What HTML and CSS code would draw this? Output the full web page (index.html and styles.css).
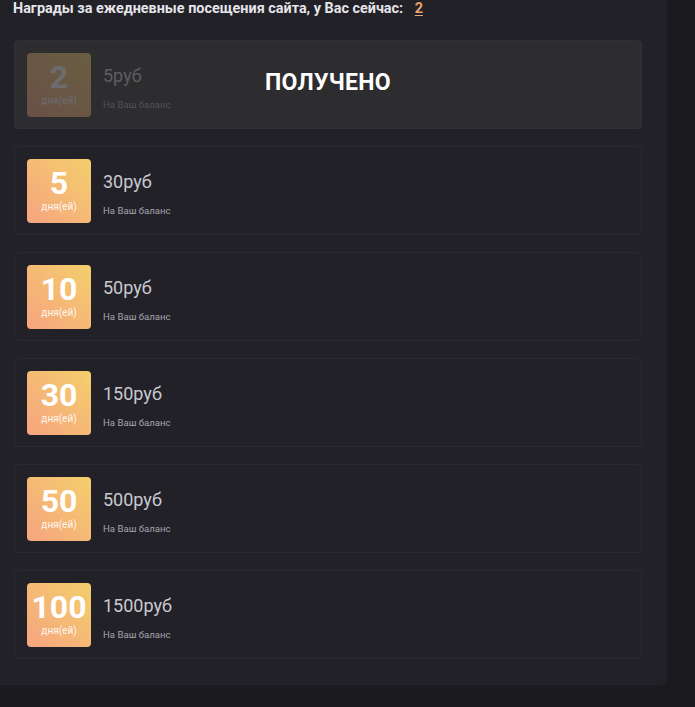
FILE: index.html
```html
<!DOCTYPE html>
<html>
    <head>
        <title>Ежедневные награды</title>
        <meta charset="UTF-8">
        <link rel="stylesheet" href="styles.css">
    </head>
    <body>
        <div class="panel">
            <div class="title">Награды за ежедневные посещения сайта, у Вас сейчас: <span class="days-now">2</span></div>

            <div class="reward done">
                <div class="reward-body">
                    <div class="badge"><span class="num">2</span><span class="unit">дня(ей)</span></div>
                    <div class="info">
                        <div class="price">5руб</div>
                        <div class="note">На Ваш баланс</div>
                    </div>
                </div>
                <div class="got">ПОЛУЧЕНО</div>
            </div>

            <div class="reward">
                <div class="reward-body">
                    <div class="badge"><span class="num">5</span><span class="unit">дня(ей)</span></div>
                    <div class="info">
                        <div class="price">30руб</div>
                        <div class="note">На Ваш баланс</div>
                    </div>
                </div>
            </div>

            <div class="reward">
                <div class="reward-body">
                    <div class="badge"><span class="num">10</span><span class="unit">дня(ей)</span></div>
                    <div class="info">
                        <div class="price">50руб</div>
                        <div class="note">На Ваш баланс</div>
                    </div>
                </div>
            </div>

            <div class="reward">
                <div class="reward-body">
                    <div class="badge"><span class="num">30</span><span class="unit">дня(ей)</span></div>
                    <div class="info">
                        <div class="price">150руб</div>
                        <div class="note">На Ваш баланс</div>
                    </div>
                </div>
            </div>

            <div class="reward">
                <div class="reward-body">
                    <div class="badge"><span class="num">50</span><span class="unit">дня(ей)</span></div>
                    <div class="info">
                        <div class="price">500руб</div>
                        <div class="note">На Ваш баланс</div>
                    </div>
                </div>
            </div>

            <div class="reward">
                <div class="reward-body">
                    <div class="badge"><span class="num">100</span><span class="unit">дня(ей)</span></div>
                    <div class="info">
                        <div class="price">1500руб</div>
                        <div class="note">На Ваш баланс</div>
                    </div>
                </div>
            </div>
        </div>
    </body>
</html>
```

FILE: styles.css
```css
body {
    margin: 0;
    background-color: #1b1a1f;
    font-family: Roboto, "Liberation Sans", sans-serif;
    height: 707px;
    overflow: hidden;
}

.panel {
    width: 639px;
    background-color: #222128;
    padding: 0 14px 26px 14px;
    border-bottom-right-radius: 6px;
    display: flex;
    flex-direction: column;
    gap: 17px;
}

.title {
    margin-left: -1px;
    height: 23px;
    line-height: 17px;
    font-size: 14.4px;
    font-weight: bold;
    color: #e6e6ea;
}

.days-now {
    color: #e8a56d;
    margin-left: 8px;
    text-decoration: underline;
    text-underline-offset: 2px;
}

.reward {
    height: 87px;
    width: 626px;
    border: 1px solid #2a2930;
    border-radius: 4px;
    position: relative;
}

.reward-body {
    display: flex;
    align-items: center;
    height: 100%;
    padding-left: 12px;
    gap: 12px;
}

.badge {
    width: 64px;
    height: 64px;
    box-sizing: border-box;
    padding-bottom: 4px;
    border-radius: 4px;
    background: linear-gradient(45deg, #f6a47f 0%, #f4cf6c 100%);
    color: #fff;
    display: flex;
    flex-direction: column;
    align-items: center;
    justify-content: center;
}

.num {
    font-size: 32px;
    font-weight: bold;
    line-height: 36px;
}

.unit {
    font-size: 10px;
    line-height: 12px;
    opacity: 0.9;
}

.info {
    display: flex;
    flex-direction: column;
    gap: 13px;
    margin-top: 5px;
}

.price {
    font-size: 18px;
    color: #c9c9d0;
}

.note {
    font-size: 9.6px;
    color: #a4a4ac;
}

.done {
    background-color: #2d2d2f;
    border-color: #313134;
}

.done .reward-body {
    opacity: 0.3;
}

.got {
    position: absolute;
    left: 0;
    right: 0;
    top: 0;
    bottom: 0;
    display: flex;
    align-items: center;
    justify-content: center;
    font-size: 23px;
    letter-spacing: 0.3px;
    font-weight: bold;
    color: #fff;
    padding-bottom: 4px;
}
```
